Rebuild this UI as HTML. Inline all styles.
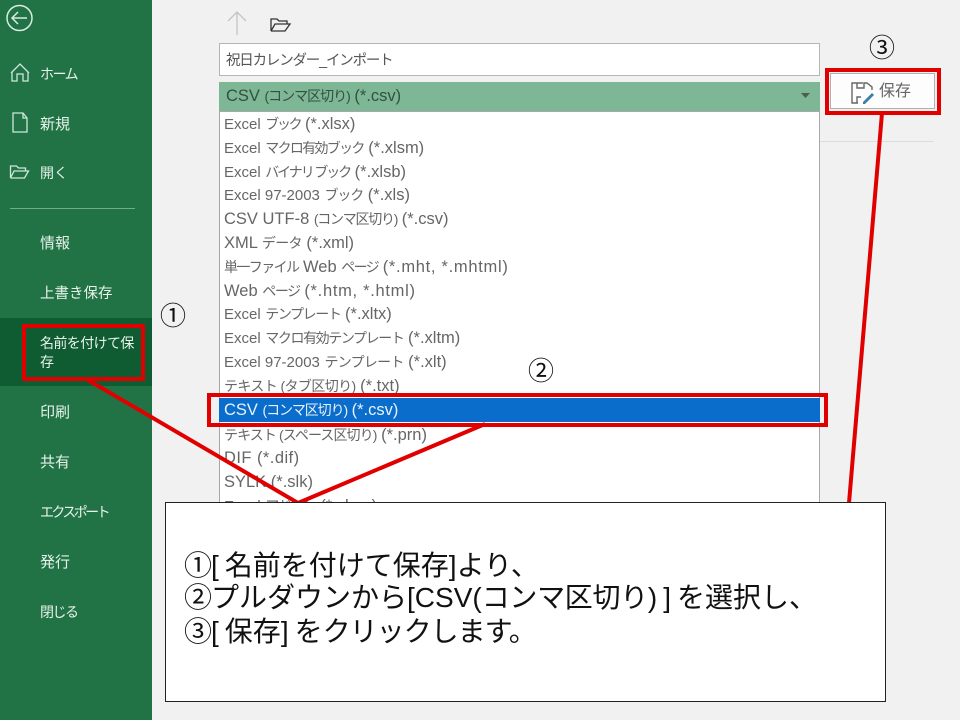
<!DOCTYPE html>
<html lang="ja"><head><meta charset="utf-8">
<style>
html,body{margin:0;padding:0}
body{width:960px;height:720px;position:relative;overflow:hidden;background:#f1f1f1;font-family:"Liberation Sans","Noto Sans CJK JP",sans-serif}
.side{position:absolute;left:0;top:0;width:152px;height:720px;background:#217346}
.n{position:absolute;left:40px;color:#e6f2ea;font-size:14px;line-height:18px;white-space:nowrap}
.sel{position:absolute;left:0;top:318px;width:152px;height:68px;background:#0f5c33}
.it{position:absolute;left:224px;font-size:16.500px;line-height:20px;color:#666;white-space:nowrap}
.j{font-size:14px;letter-spacing:-1.400px}
.e{font-size:15px}
.box{position:absolute;border:4px solid #e00000;box-sizing:border-box}
.c{position:absolute;font-size:26px;line-height:28px;color:#111}
svg{position:absolute;left:0;top:0}
.cn{letter-spacing:-1px;margin-left:-1px}
.l{position:absolute;left:185px;font-size:28px;line-height:32px;color:#111;white-space:nowrap}
</style></head><body>
<div class="side"></div><div class="sel"></div>
<div style="position:absolute;left:10px;top:208px;width:125px;height:1px;background:#6fae8c"></div>
<div class="n" style="top:65px;letter-spacing:-1.500px">ホーム</div>
<div class="n" style="top:116px;font-size:15px">新規</div>
<div class="n" style="top:164px">開く</div>
<div class="n" style="top:235px;font-size:15px">情報</div>
<div class="n" style="top:285px;font-size:14.500px">上書き保存</div>
<div class="n" style="top:334px;font-size:14px;letter-spacing:-.6px;line-height:19px">名前を付けて保<br>存</div>
<div class="n" style="top:404px;font-size:15px">印刷</div>
<div class="n" style="top:454px;font-size:15px">共有</div>
<div class="n" style="top:503px;letter-spacing:-2.600px">エクスポート</div>
<div class="n" style="top:554px;font-size:15px">発行</div>
<div class="n" style="top:603px;letter-spacing:-1.500px">閉じる</div>

<div style="position:absolute;left:219px;top:43px;width:601px;height:33px;box-sizing:border-box;background:#fff;border:1px solid #b5b5b5"></div>
<div style="position:absolute;left:226px;top:51px;font-size:14.500px;letter-spacing:-1.200px;line-height:20px;color:#555;white-space:nowrap">祝日カレンダー_インポート</div>
<div style="position:absolute;left:219px;top:82px;width:601px;height:29px;background:#7db795"></div>
<div class="it" style="left:226px;top:86px;color:#33503f">CSV <span class="j" style="letter-spacing:-1px">(コンマ区切り)</span> (*.csv)</div>
<div style="position:absolute;left:219px;top:111px;width:601px;height:400px;box-sizing:border-box;background:#fff;border:1px solid #a8a8a8"></div>
<div class="it" style="top:114px"><span class="e">Excel</span> <span class="j" style="letter-spacing:-2.300px">ブック</span> (*.xlsx)</div>
<div class="it" style="top:138px"><span class="e">Excel</span> <span class="j" style="letter-spacing:-1.700px">マクロ有効ブック</span> (*.xlsm)</div>
<div class="it" style="top:162px"><span class="e">Excel</span> <span class="j" style="letter-spacing:-2.100px">バイナリ ブック</span> (*.xlsb)</div>
<div class="it" style="top:185px"><span class="e">Excel 97-2003</span> <span class="j" style="letter-spacing:-1.100px">ブック</span> (*.xls)</div>
<div class="it" style="top:209px">CSV UTF-8 <span class="j" style="letter-spacing:-1.250px">(コンマ区切り)</span> (*.csv)</div>
<div class="it" style="top:233px">XML <span class="j" style="letter-spacing:-.7px">データ</span> (*.xml)</div>
<div class="it" style="top:257px"><span class="j" style="letter-spacing:-1.600px">単一ファイル</span> Web <span class="j" style="letter-spacing:-1.600px">ページ</span> <span style="letter-spacing:.7px">(*.mht, *.mhtml)</span></div>
<div class="it" style="top:281px">Web <span class="j">ページ</span> <span style="letter-spacing:.7px">(*.htm, *.html)</span></div>
<div class="it" style="top:304px"><span class="e">Excel</span> <span class="j">テンプレート</span> (*.xltx)</div>
<div class="it" style="top:328px"><span class="e">Excel</span> <span class="j">マクロ有効テンプレート</span> (*.xltm)</div>
<div class="it" style="top:352px"><span class="e">Excel 97-2003</span> <span class="j" style="letter-spacing:-.75px">テンプレート</span> (*.xlt)</div>
<div class="it" style="top:376px"><span class="j" style="letter-spacing:-.6px">テキスト (タブ区切り)</span> (*.txt)</div>
<div style="position:absolute;left:219px;top:398px;width:601px;height:24px;background:#0a6ccb"></div>
<div class="it" style="top:400px;color:#e8f2fb">CSV <span class="j" style="letter-spacing:-1.100px">(コンマ区切り)</span> (*.csv)</div>
<div class="it" style="top:425px"><span class="j" style="letter-spacing:-.9px">テキスト (スペース区切り)</span> (*.prn)</div>
<div class="it" style="top:448px;letter-spacing:.45px">DIF (*.dif)</div>
<div class="it" style="top:472px">SYLK (*.slk)</div>
<div class="it" style="top:496px"><span class="e">Excel</span> <span class="j">アドイン</span> (*.xlam)</div>

<div style="position:absolute;left:830px;top:73px;width:105px;height:36px;box-sizing:border-box;background:#fdfdfd;border:1px solid #b0b0b0"></div>
<div style="position:absolute;left:879px;top:82px;font-size:16px;line-height:20px;color:#666;white-space:nowrap">保存</div>
<div style="position:absolute;left:820px;top:141px;width:114px;height:1px;background:#dcdcdc"></div>

<svg width="960" height="720" viewBox="0 0 960 720" fill="none">
<circle cx="19.500" cy="18" r="12.500" stroke="#d8ece0" stroke-width="1.500"/>
<path d="M27 18H12M18 12l-6 6 6 6" stroke="#d8ece0" stroke-width="1.500"/>
<path d="M11 73l9-9 9 9M12 72v9h5v-7h6v7h5v-9" stroke="#cfe6d8" stroke-width="1.300"/>
<path d="M13 113h10l4 5v14H13zM23 113v5h4" stroke="#cfe6d8" stroke-width="1.300"/>
<path d="M10.500 178v-12h6l2 2h7v3M10.500 178h14l4-7H14l-3.500 7" stroke="#cfe6d8" stroke-width="1.300"/>
<path d="M237 35V13M228 21l9-9 9 9" stroke="#c4c4c4" stroke-width="1.300"/>
<path d="M271 31V19h6l2 2h8v3M271 31h14l5-7h-15l-4 7" stroke="#333" stroke-width="1.300"/>
<path d="M801 93h9l-4.500 5z" fill="#4a5f53"/>
<path d="M863 83h-11v20h6M857 83v5h7v-5h3l5 4v3M857 103v-6h4" stroke="#666" stroke-width="1.400"/>
<path d="M863 102l9-9 2 2-9 9h-2z" fill="#3d7ea6"/>
<path d="M88 380L298 503L485 424" stroke="#e00000" stroke-width="4"/>
<path d="M882 113L849 503" stroke="#e00000" stroke-width="4"/>
</svg>
<div class="box" style="left:22px;top:324px;width:123px;height:57px"></div>
<div class="box" style="left:207px;top:393px;width:621px;height:34px"></div>
<div class="box" style="left:825px;top:68px;width:116px;height:47px"></div>
<div class="c" style="left:160px;top:302px">①</div>
<div class="c" style="left:528px;top:357px">②</div>
<div class="c" style="left:869px;top:34px">③</div>

<div style="position:absolute;left:165px;top:502px;width:721px;height:200px;box-sizing:border-box;background:#fff;border:1px solid #222"></div>
<div class="l" style="top:550px"><span class="cn">①</span><span style="letter-spacing:6px">[</span>名前を付けて保存]より、</div>
<div class="l" style="top:582px"><span class="cn">②</span>プルダウンから[CSV(<span style="letter-spacing:-.3px">コンマ区切り</span><span style="letter-spacing:6px">)]</span>を選択し、</div>
<div class="l" style="top:616px"><span class="cn">③</span><span style="letter-spacing:6px">[</span>保存<span style="letter-spacing:6px">]</span>を<span style="letter-spacing:-1px">クリックします。</span></div>
</body></html>
